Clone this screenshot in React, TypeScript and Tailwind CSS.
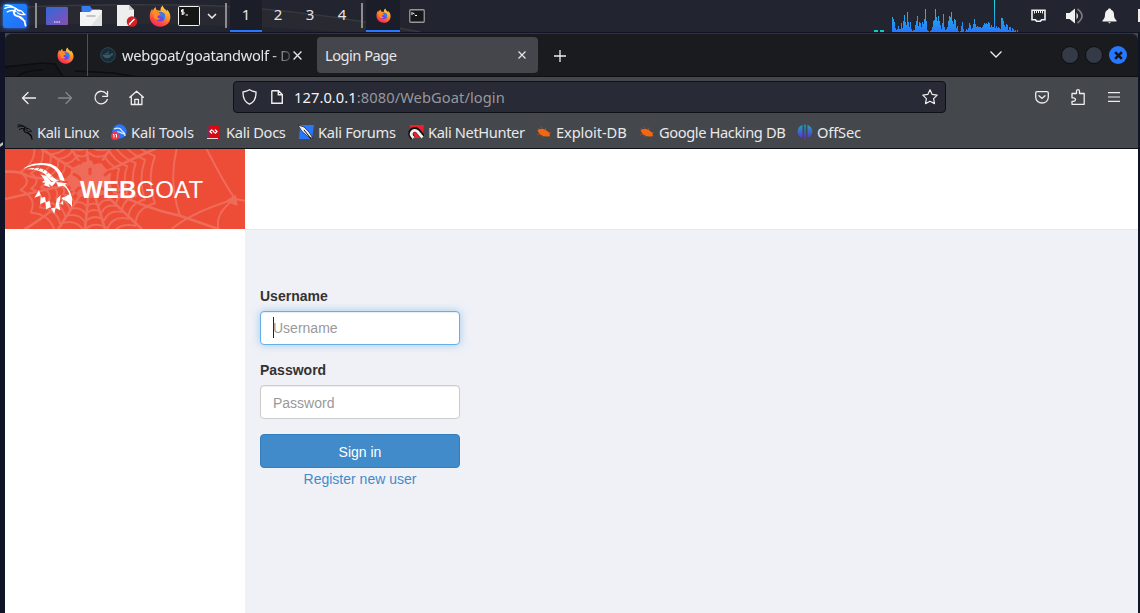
import React from "react";

const UI_FONT = "font-['Noto_Sans',sans-serif]";

const LOAD = [
  51, 58, 66, 85, 90, 86, 78, 88, 87, 70, 85, 62, 44, 66, 75, 36, 67, 80, 67, 88, 93, 90, 90, 75, 63, 48, 78, 66, 70, 80,
  65, 72, 56, 27, 63, 90, 93, 96, 92, 90, 80, 63, 60, 27, 52, 63, 48, 63, 76, 88, 70, 42, 80, 90, 88, 82, 63, 48, 50, 36,
  63, 72, 57, 60, 85, 78, 93, 96, 92, 78, 66, 88, 96, 92, 87, 90, 84, 68, 75, 88, 85, 72, 57, 72, 82, 78, 82, 80, 82, 84,
  80, 74, 68, 72, 68, 73, 66, 68, 80, 76, 80, 80, 0, 84, 78, 84, 80, 85, 88, 54, 54, 63, 74, 80, 72, 76, 90, 80, 80, 92,
  85, 88, 92, 90, 95, 91,
];

const SPOKES = [187, 217, 245, 268, 297, 337, 23, 50, 73, 96, 120, 147, 170];
const RINGS = [44, 66, 88, 112, 138, 166, 196];

function spot(angle: number, radius: number) {
  const a = (angle * Math.PI) / 180;
  return [255 + Math.cos(a) * radius * 1.08, 92 + Math.sin(a) * radius * 0.92].map((n) => n.toFixed(1)).join(" ");
}

const RING_PATHS = RINGS.map((r) =>
  SPOKES.map((a, i) => {
    const next = i === SPOKES.length - 1 ? SPOKES[0] : SPOKES[i + 1];
    const mid = a + ((next - a + 360) % 360) / 2;
    return `${i === 0 ? `M${spot(a, r)}` : ""}Q${spot(mid, r * 0.8)} ${spot(next, r)}`;
  }).join(""),
);

function Firefox({ className, id }: { className: string; id: string }) {
  return (
    <svg viewBox="0 0 24 24" className={className}>
      <defs>
        <linearGradient id={id} x1="0.8" y1="0" x2="0.3" y2="1">
          <stop offset="0" stopColor="#ffe14d" />
          <stop offset="0.4" stopColor="#ff9a2b" />
          <stop offset="0.75" stopColor="#ff4f3d" />
          <stop offset="1" stopColor="#ef2463" />
        </linearGradient>
      </defs>
      <path
        fill={`url(#${id})`}
        d="M15 .6c.3 2 1.500 3.200 3 4.400.6.500 1 1.100 1.300 1.700.300-.6.300-1.200.200-1.900 2.700 2.300 4 5.600 3.800 9C23 19.600 18 23.600 12.200 23.600 5.800 23.600.8 18.900.8 12.500c0-3.400 1-6.300 2.700-8.500.1 1 .3 1.600.7 2.200C5 4.700 6 3.300 7.300 2.300c0 1.500.5 2.800 1.500 3.600 1.300-.2 2.600 0 3.700.600C12.300 4 13.200 1.900 15 .6z"
      />
      <circle cx="12.300" cy="12.800" r="5.300" fill="#7a42d8" />
      <path fill="#2d7ff0" d="M9 9.500c2-2.800 7-2 8.300 1.300.8 2.500 0 4.700-1.600 6 .5-3-1.500-4.500-4-4.400z" />
      <path fill="#ff8b26" d="M4.500 7.500c2-2 5-1.800 6.500-.3-.8 1-.8 1.500 1.800 2.600-.6 1.200-3 1.200-3.500 2.700-.3 1.500 1 2.600 3.300 2.300-1.600 2-5.600 2-7-.8-.8-2-1-4.700-1.100-6.500z" />
    </svg>
  );
}

function Dragon({ className, color }: { className: string; color: string }) {
  return (
    <svg viewBox="0 0 24 24" className={className} fill="none" stroke={color} strokeLinecap="round" strokeLinejoin="round">
      <path strokeWidth="1.500" d="M1 4.500c5-2.500 10-2 15 2.800M3.500 8.200c3-2 6-2 9-.2M1.500 1.500C5 .8 8 2 10 3.500" />
      <path strokeWidth="1.900" d="M12 5.500c-2.500 2-2.500 6 1.500 7 4.500.8 8 2.500 9 10" />
      <path strokeWidth="1.300" d="M14 7c2.500-1 5 0 6.500 3l1.500 1-3 .2c-2-.1-3.600-.8-5-2M16 13.300c1.500 3 3.500 3.500 6 4.500" />
    </svg>
  );
}

function MiniTerminal({ className }: { className: string }) {
  return (
    <svg viewBox="0 0 22 20" className={className}>
      <rect x=".5" y=".5" width="21" height="19" rx="1" fill="#151716" stroke="#f2f2f2" />
      <path d="M6 4H3.500v2H6v2H3.300M4.700 3v6M7.500 9H10" fill="none" stroke="#f2f2f2" />
    </svg>
  );
}

function Divider() {
  return <div className="h-[25px] w-[2px] shrink-0 bg-[#8d8d91]" />;
}

function Taskbar() {
  return (
    <header className={`relative flex h-8 items-center overflow-hidden bg-[#222430] pb-px text-[15px] text-[#e4e5e9] ${UI_FONT}`}>
      <svg viewBox="0 0 620 32" className="absolute left-0 top-0 h-8 w-[620px]" fill="none">
        <path d="M0 8C90 4 160 4 220 6 300 10 370 22 420 32L340 32C240 24 100 22 0 26z" fill="#282931" />
        <path d="M0 8C90 4 160 4 220 6 300 10 370 22 420 32" stroke="#38383f" strokeWidth="1.500" />
      </svg>
      <div className="relative ml-[3px] flex size-6 items-center justify-center rounded-[2px] bg-gradient-to-br from-[#148cff] to-[#2869f5] shadow-[0_0_4px_#2777ff]">
        <Dragon className="size-[23px]" color="#ffffff" />
      </div>
      <div className="relative ml-2"><Divider /></div>
      <svg viewBox="0 0 22 18" className="relative ml-[9px] h-[18px] w-[22px]">
        <defs>
          <linearGradient id="desk" x1="0" y1="0" x2="1" y2="1">
            <stop stopColor="#2f69dd" /><stop offset="1" stopColor="#8a4faf" />
          </linearGradient>
        </defs>
        <rect width="22" height="18" rx="1" fill="url(#desk)" />
        <path d="M8 15h1.500M10.300 15h1.500M12.600 15h1.500" stroke="#fff" strokeWidth="1.200" />
      </svg>
      <svg viewBox="0 0 22 20" className="relative ml-3 h-5 w-[22px]">
        <path d="M1.500 0H10l2 3h8.500v6h-19z" fill="#367bf0" />
        <path d="M0 6h10l2-2h10v16H0z" fill="#f4f4f4" />
        <path d="M22 6v14H11z" fill="#e2e2e2" />
        <path d="M7 10h8" stroke="#b5b5b5" strokeWidth="1.500" strokeLinecap="round" />
      </svg>
      <svg viewBox="0 0 21 22" className="relative ml-[15px] h-[22px] w-[21px]">
        <path d="M0 0h12l5 5v16H0z" fill="#eeeeee" /><path d="M12 0v5h5z" fill="#c9c9c9" />
        <circle cx="15" cy="16.500" r="5.300" fill="#d81e25" />
        <path d="M12.500 19l5-5M12 19.300l1.500-.3" stroke="#fff" strokeWidth="1.500" />
      </svg>
      <Firefox className="relative ml-[11px] size-[22px]" id="fxTask" />
      <MiniTerminal className="relative ml-[7px] h-5 w-[22px]" />
      <svg viewBox="0 0 10 6" className="relative ml-[7px] h-[6px] w-[10px]"><path d="M1 1l4 4 4-4" fill="none" stroke="#eee" strokeWidth="1.500" /></svg>
      <div className="relative ml-2"><Divider /></div>
      <div className="relative -mb-px ml-[3px] flex items-stretch self-stretch">
        <span className="flex w-8 items-center justify-center border-b-2 border-[#2777ff] bg-[#1b1e29] pb-px">1</span>
        <span className="flex w-8 items-center justify-center pb-[3px]">2</span>
        <span className="flex w-8 items-center justify-center pb-[3px]">3</span>
        <span className="flex w-8 items-center justify-center pb-[3px]">4</span>
      </div>
      <div className="relative ml-[3px]"><Divider /></div>
      <div className="relative -mb-px ml-[3px] flex w-[34px] items-center justify-center self-stretch border-b-2 border-[#2777ff] bg-[#1b1e29]">
        <Firefox className="size-[15px]" id="fxApp" />
      </div>
      <svg viewBox="0 0 16 14" className="relative ml-[9px] h-[14px] w-4">
        <rect x=".75" y=".75" width="14.500" height="12.500" rx="1" fill="#161719" stroke="#96979b" strokeWidth="1.300" />
        <path d="M3 3v3M4 4l1.500 1M6 6.500h2" stroke="#fff" fill="none" />
      </svg>
      <svg viewBox="0 0 432 96" className="ml-[449px] h-8 w-36 shrink-0 self-start" shapeRendering="crispEdges">
        <defs>
          <linearGradient id="load" gradientUnits="userSpaceOnUse" x1="0" y1="96" x2="0" y2="0">
            <stop stopColor="#2777ff" /><stop offset="1" stopColor="#19e1d2" />
          </linearGradient>
        </defs>
        <path fill="#14c9b5" d="M0 91h12v5H0zM18 91h12v5H18z" />
        <path fill="url(#load)" d={LOAD.map((y, i) => `M${54 + i * 3} 96V${y}h3V96z`).join("")} />
      </svg>
      <svg viewBox="0 0 15 14" className="ml-[13px] h-[14px] w-[15px] shrink-0">
        <path d="M1 1.200h13v9.500h-3.500l-1 1.500h-4l-1-1.500H1z" fill="none" stroke="#f0f0f0" strokeWidth="1.600" />
        <path d="M3.500 2v2.500M5.500 2v2M7.500 2v2M9.500 2v2M11.500 2v2.500" stroke="#f0f0f0" />
      </svg>
      <svg viewBox="0 0 18 16" className="ml-5 h-4 w-[18px] shrink-0">
        <path d="M0 5h3.500L9 .5v15L3.500 11H0zM10.500 4.500q3 3.500 0 7z" fill="#f0f0f0" />
        <path d="M11.500 1q9 7 0 14" fill="none" stroke="#777881" strokeWidth="1.700" />
      </svg>
      <svg viewBox="0 0 15 16" className="ml-[18px] h-4 w-[15px] shrink-0">
        <path d="M7.500.5c1 0 1.500.5 1.500 1.300 2 .7 3 2.500 3 4.700 0 3 .8 4.500 2.500 6v1H.5v-1C2.200 11 3 9.500 3 6.500c0-2.200 1-4 3-4.700C6 1 6.500.5 7.500.5zM6 14.300h3l-1.500 1.200z" fill="#f2f2f2" />
      </svg>
      <div className="ml-auto h-[13px] w-[2px] shrink-0 bg-[#eee]" />
    </header>
  );
}

function Close({ className }: { className: string }) {
  return <svg viewBox="0 0 8 8" className={className}><path d="M.5.5l7 7M7.500.5l-7 7" stroke="#e7e7e9" strokeWidth="1.200" /></svg>;
}

function TabStrip() {
  return (
    <div className="relative flex h-11 shrink-0 overflow-hidden rounded-t-[7px] border-b border-t border-b-[#0d0f13] border-t-[#33343a] bg-[#1a1b1f] text-[#e6e6e8]">
      <svg viewBox="0 0 140 44" className="absolute left-0 top-0 h-11 w-[140px]">
        <path d="M0 32l48-3 10 15H0z" fill="#151619" />
        <path d="M0 33l36-4 14 1 8 13M11 43c5-4 15-7 27-7M70 37l38 2 25 4" stroke="#0d0e10" strokeWidth="1.500" fill="none" />
      </svg>
      <div className="relative flex w-[83px] items-center border-r border-[#505157] pl-[52px]">
        <Firefox className="size-[17px]" id="fxTab" />
      </div>
      <div className="relative flex w-[229px] items-center pl-[12px]">
        <svg viewBox="0 0 16 16" className="size-4">
          <circle cx="8" cy="8" r="7.300" fill="#192b35" stroke="#2c4a5a" />
          <path d="M3 8h8l1-2 1 1.500-2 1c-1 3-6 3.500-8 0zM5 6.500h4M7 5h2" fill="#3a5c6e" stroke="#3a5c6e" strokeWidth=".8" />
        </svg>
        <span className="ml-[6px] w-[170px] whitespace-nowrap text-[14.670px] tracking-[-0.3px] [mask-image:linear-gradient(90deg,#000_148px,transparent_174px)]">webgoat/goatandwolf - D</span>
        <Close className="ml-px size-[9px]" />
      </div>
      <div className="my-[3px] flex w-[221px] items-center rounded-[4px] bg-[#44464c] pl-2 pr-3">
        <span className="text-[14.670px] tracking-[-0.5px]">Login Page</span>
        <Close className="ml-auto size-2" />
      </div>
      <svg viewBox="0 0 12 12" className="ml-4 mt-4 size-3"><path d="M6 0v12M0 6h12" stroke="#eeeeef" strokeWidth="1.300" /></svg>
      <svg viewBox="0 0 12 7" className="ml-[424px] mt-[17px] h-[7px] w-3"><path d="M.5.5L6 6 11.500.5" fill="none" stroke="#eeeeef" strokeWidth="1.300" /></svg>
      <div className="ml-auto mr-[11px] flex items-center gap-[6px]">
        <span className="size-[18px] rounded-full border border-[#0c0e11] bg-[#343a46]" />
        <span className="size-[18px] rounded-full border border-[#0c0e11] bg-[#343a46]" />
        <span className="flex size-[18px] items-center justify-center rounded-full bg-[#2777ff]">
          <svg viewBox="0 0 8 8" className="size-[9px]"><path d="M1 1l6 6M7 1L1 7" stroke="#101621" strokeWidth="2.200" /></svg>
        </span>
      </div>
    </div>
  );
}

function AddressBar() {
  return (
    <div className="flex h-10 shrink-0 items-center text-[#eeeeef]">
      <svg viewBox="0 0 124 16" className="ml-4 mt-[2px] h-4 w-[124px] shrink-0" fill="none" stroke="#eeeeef" strokeWidth="1.300" strokeLinejoin="round" strokeLinecap="round">
        <path d="M14.500 8H1.500M7 2.500L1.500 8 7 13.500" />
        <path d="M37.500 8h13M45 2.500l5.500 5.500-5.500 5.500" stroke="#86888d" />
        <path d="M85.500 4A6.300 6.300 0 1 0 86.300 9.500M86.500 1.500v4.800h-4.800" />
        <path d="M108.800 7.300l6.800-6 6.800 6M110.300 6.300v8.200h10.600V6.300M113.800 14.500V9.300h3.600v5.200" />
      </svg>
      <div className="ml-[88px] flex h-8 w-[713px] shrink-0 items-center rounded-[4px] border border-[#101116] bg-[#282a35] px-2">
        <svg viewBox="0 0 15 16" className="h-4 w-[15px]" fill="none" stroke="#eee" strokeWidth="1.300"><path d="M7.500.8c2 1.300 4 1.900 6.500 2.200.2 6.500-2 10.200-6.500 12.200C3 13.200.8 9.500 1 3 3.500 2.700 5.500 2.100 7.500.8z" /></svg>
        <svg viewBox="0 0 12 14" className="ml-[14px] h-[14px] w-3" fill="none" stroke="#eee" strokeWidth="1.400"><path d="M.8 1.200Q.8.700 1.300.7H7.500L11.300 4.500v8.800H.8zM7.300.7v4h4" /></svg>
        <span className="ml-[11px] whitespace-nowrap text-[14.670px] tracking-[0.08px] text-[#97989e]"><span className="text-[#f2f2f3]">127.0.0.1</span>:8080/WebGoat/login</span>
        <svg viewBox="0 0 16 16" className="ml-auto mr-[-1px] size-4" fill="none" stroke="#eee" strokeWidth="1.200" strokeLinejoin="round"><path d="M8 .8l2.200 4.600 5 .7-3.600 3.500.9 5L8 12.300l-4.500 2.300.9-5L.8 6.100l5-.7z" /></svg>
      </div>
      <svg viewBox="0 0 14 13" className="ml-[89px] h-[13px] w-[14px]" fill="none" stroke="#eee" strokeWidth="1.300" strokeLinecap="round"><path d="M2 .7h10q1.300 0 1.300 1.300v4c0 8-12.600 8-12.600 0V2Q.7.700 2 .7zM4 4.800l3 2.700 3-2.700" /></svg>
      <svg viewBox="0 0 14 16" className="ml-[22px] h-4 w-[14px]" fill="none" stroke="#eee" strokeWidth="1.300" strokeLinejoin="round"><path d="M1 4.500h4.500V2.300Q5.500.7 7 .7t1.500 1.600v2.200h4.700v10.800H1v-3h1.500Q4.500 12 4.500 10.500T2.500 8.800H1z" /></svg>
      <svg viewBox="0 0 12 10" className="ml-[23px] h-[10px] w-3" stroke="#eee" strokeWidth="1.200"><path d="M0 .7h12M0 5h12M0 9.300h12" /></svg>
    </div>
  );
}

function Bug() {
  return (
    <svg viewBox="0 0 16 16" className="size-4" fill="#f26711" stroke="#a9552c" strokeWidth=".7">
      <path d="M1.500 4.500l3 1.500M5 2.500l1.500 3M10 3.500l-.5 3M15 8.500l-3 0M1 11l4-1.500M6 13.500l2-3M14 12.500l-2-1" />
      <path stroke="none" d="M1.500 6.500C3.500 4.500 8.500 4.500 11 7l2.500 2 .5 2.500-2 1C8 13 4.500 11.500 3 9z" />
    </svg>
  );
}

function Bookmark({ icon, label, width }: { icon: React.ReactNode; label: string; width: string }) {
  return <div className={`flex shrink-0 items-center gap-1 whitespace-nowrap ${width}`}>{icon}<span>{label}</span></div>;
}

function Bookmarks() {
  return (
    <nav className="flex h-[31px] shrink-0 items-center pb-[2px] pl-3 text-[14.670px] text-[#e9e9eb]">
      <Bookmark width="w-[94px] tracking-[-0.4px]" label="Kali Linux" icon={<Dragon className="size-4" color="#08090a" />} />
      <Bookmark width="w-[95px] tracking-[-0.15px]" label="Kali Tools" icon={
        <svg viewBox="0 0 16 16" className="size-4"><circle cx="8.500" cy="7.500" r="7.200" fill="#2777ff" /><path d="M3 5c5-2 7 0 8 2 2 1 3 2 3 5M6 8c2-1 4 1 7 2" stroke="#d9e7ff" strokeWidth="1.300" fill="none" /><rect y="8" width="8" height="8" rx="4" fill="#f43446" /><path d="M2 10.500h1v3M4.500 10.500h1v3" stroke="#fff" fill="none" /></svg>} />
      <Bookmark width="w-[92px] tracking-[-0.3px]" label="Kali Docs" icon={
        <svg viewBox="0 0 16 16" className="size-4"><path d="M2 1h11v14H2z" fill="#d90914" /><path d="M1 1h1.500v13H1z" fill="#294b9d" /><path d="M1 14.500h11" stroke="#edd" /><path d="M6 5.500L4 7.500l2 2M9 5.500l2 2-2 2M6.500 6l2 3" stroke="#fff" fill="none" strokeWidth="1.200" /></svg>} />
      <Bookmark width="w-[110px] tracking-[-0.3px]" label="Kali Forums" icon={
        <svg viewBox="0 0 16 16" className="size-4"><path d="M2 1h14l-2 14H1z" fill="#2777ff" /><path d="M0 1l6 2 5 5 4 6.500-5-2-6-5z" fill="#eee" stroke="#15181c" strokeWidth=".7" /><path d="M6 6l4 5 3 4" stroke="#111" /></svg>} />
      <Bookmark width="w-[128px] tracking-[-0.38px]" label="Kali NetHunter" icon={
        <svg viewBox="0 0 16 16" className="size-4"><path d="M1.500 1H16l-1.500 13H6z" fill="#ef202b" /><path d="M5 14C-1 8 6 3 10 7l5 6" stroke="#111" strokeWidth="5" fill="none" /><path d="M5.500 14C0 9 6 4 9.500 7.500L14.500 13.500" stroke="#f3f3f3" strokeWidth="2.800" fill="none" /></svg>} />
      <Bookmark width="w-[103px] tracking-[-0.1px]" label="Exploit-DB" icon={<Bug />} />
      <Bookmark width="w-[158px] tracking-[-0.4px]" label="Google Hacking DB" icon={<Bug />} />
      <Bookmark width="w-[80px] tracking-[-0.15px]" label="OffSec" icon={
        <svg viewBox="0 0 16 16" className="size-4"><defs><linearGradient id="off" gradientUnits="userSpaceOnUse" x1="0" y1="1" x2="0" y2="15"><stop stopColor="#18a4bd" /><stop offset="1" stopColor="#6427dc" /></linearGradient></defs><path d="M5.500 1v13C-1 12.500-1 2.500 5.500 1zM10.500 1v13C17 12.500 17 2.500 10.500 1zM7.300 .5h1.400v15H7.300z" fill="url(#off)" /></svg>} />
    </nav>
  );
}

function Brand() {
  return (
    <div className="relative h-20 w-60 overflow-hidden bg-[#ed4c37]">
      <svg viewBox="0 0 720 240" className="absolute left-0 top-0 h-20 w-60" fill="none">
        <g stroke="#ef6b5a" strokeLinecap="round" strokeLinejoin="round">
          <path d={RING_PATHS[1]} fill="#ef6b5a" stroke="none" />
          <g strokeWidth="6">
            {RING_PATHS.slice(2).map((d) => <path key={d} d={d} />)}
          </g>
          <path strokeWidth="8" d="M255 92Q80 95 60 76 40 66 0 68M255 92L110 0M255 92L200 0M255 92L245 0M255 92L315 0M255 92Q380 30 450 0M255 92Q400 175 525 200L640 240M255 92L410 240M255 92L300 240M255 92L240 240M255 92L160 240M255 92Q120 205 60 240M255 92L0 150" />
          <path strokeWidth="6" d="M515 0Q490 100 525 200M605 0Q650 90 690 150L720 155M690 150Q560 190 500 240M690 150Q630 190 640 240" />
          <path strokeWidth="7" d="M690 142l-22 14 26 10z" fill="#ef6b5a" />
          <path stroke="#ed4c37" strokeWidth="9" d="M205 50q8-14 22-8M268 42q20-10 38 4M207 76q14 4 18 14M300 78q14-14 24-10M214 126q8-14 22-8M292 120q20 2 28 14M255 60v14" />
        </g>
        <g fill="#fff">
          <path d="M55 60c16-16 52-22 82-15 24 7 38 32 42 52l-14-4c-4-22-17-38-37-43-25-5-51 0-73 10z" />
          <path d="M65 61c22-7 50-6 66 10 12 11 17 20 32 24l-15 5c-13-6-19-14-26-23-14-12-35-16-57-16z" />
          <path d="M108 77l16 3 14 18 15 2-12 12-10-7 4 10-18-6 4-8-11-1 9-6z" />
          <path d="M153 99l33 4-6 4c10 12 19 24 18 32 5 8 5 18 0 28l-11-7 5-11-16 4-7-6 15-6 9-5c-4-13-10-22-20-26l-13 3z" />
          <path d="M102 124l-14 22 20-7-3 26 16-6 2 22 13-6 12 19 4-17 14 7-5-24 14 8-2-17 20 10 8 14V146l-23 5-15 15 4-28-12 12-4 26-13 2-4-23-11 5-3-17-10 3z" />
        </g>
        <path d="M91 57l-7 7M105 56l-5 8M118 60l-4 7M130 69l-5 6M140 81l-4 4" stroke="#ed4c37" strokeWidth="2.500" />
      </svg>
      <div className="relative flex h-full items-center pl-[75px] pt-[2px] font-['Liberation_Sans',sans-serif] text-[24px] leading-none tracking-[0.15px] text-white">
        <h1 className="whitespace-nowrap font-normal"><strong>WEB</strong>GOAT</h1>
      </div>
    </div>
  );
}

function LoginPage() {
  return (
    <main className="flex min-h-0 flex-1 border-t border-[#101116] bg-[#f0f1f7] font-['Liberation_Sans',sans-serif] text-[14px] leading-5 text-[#333]">
      <aside className="w-60 shrink-0 bg-white"><Brand /></aside>
      <section className="flex-1">
        <div className="h-[81px] border-b border-[#e5e6eb] bg-white" />
        <form className="ml-[15px] mt-14 flex w-[200px] flex-col">
          <label className="mb-[5px] font-bold" htmlFor="user">Username</label>
          <div className="flex h-[34px] items-center rounded-[4px] border border-[#66afe9] bg-white pl-3 shadow-[inset_0_1px_1px_rgba(0,0,0,.075),0_0_8px_rgba(102,175,233,.6)]">
            <span className="-mt-px h-[21px] w-px bg-[#222]" />
            <input id="user" className="-ml-px w-40 bg-transparent outline-none placeholder:text-[#999]" placeholder="Username" />
          </div>
          <label className="mb-[5px] mt-[15px] font-bold" htmlFor="pass">Password</label>
          <input id="pass" type="password" className="h-[34px] rounded-[4px] border border-[#ccc] bg-white px-3 pt-[2px] shadow-[inset_0_1px_1px_rgba(0,0,0,.075)] placeholder:text-[#999]" placeholder="Password" />
          <button type="button" className="mt-[15px] h-[34px] rounded-[4px] border border-[#357ebd] bg-[#428bca] pt-px text-white">Sign in</button>
          <a className="mt-px text-center text-[#428bca]">Register new user</a>
        </form>
      </section>
    </main>
  );
}

export default function App() {
  return (
    <div className="flex h-[613px] w-[1140px] flex-col overflow-hidden bg-[#111327]">
      <Taskbar />
      <div className="relative flex min-h-0 flex-1 pl-[5px] pr-[2px] pt-px">
        <svg viewBox="0 0 5 580" className="absolute left-0 top-0 h-[580px] w-[5px]"><path d="M0 112l3-2v3l-3 2z" fill="#b9bac2" /></svg>
        <div className={`flex min-w-0 flex-1 flex-col bg-[#44474c] ${UI_FONT}`}>
          <TabStrip />
          <AddressBar />
          <Bookmarks />
          <LoginPage />
        </div>
      </div>
    </div>
  );
}
